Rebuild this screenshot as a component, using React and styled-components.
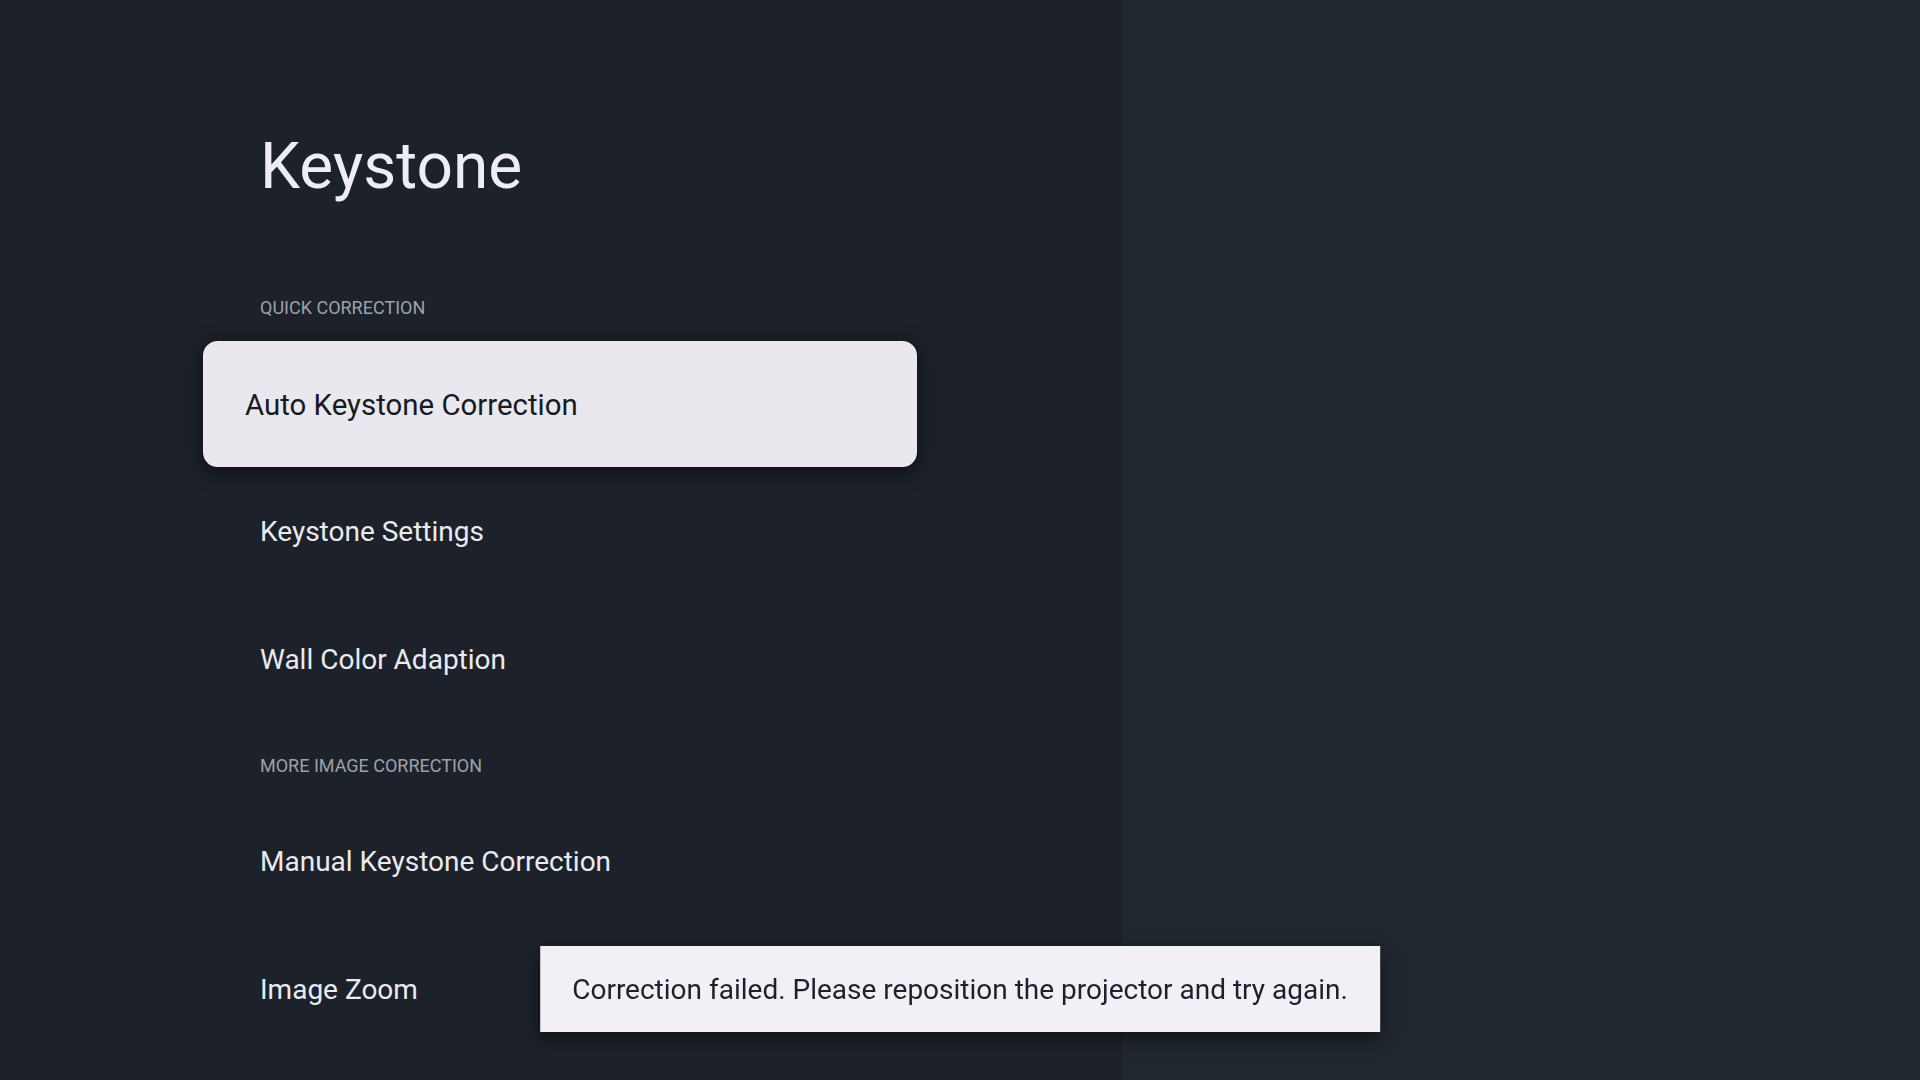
import React from "react";
import styled, { createGlobalStyle, css } from "styled-components";

const GlobalStyle = createGlobalStyle`
  html, body {
    margin: 0;
    padding: 0;
    background: #21272f;
    overflow: hidden;
  }

  body {
    font-family: Roboto, "Noto Sans", "Liberation Sans", sans-serif;
    -webkit-font-smoothing: antialiased;
  }
`;

const Screen = styled.div`
  display: flex;
  width: 100vw;
  height: 100vh;
`;

const SidePanel = styled.div`
  width: 1122px;
  flex-shrink: 0;
  background: #1d2129;
  padding: 129px 0 0 220px;
  box-sizing: border-box;
  display: flex;
  flex-direction: column;
`;

const Backdrop = styled.div`
  flex: 1;
  background: #21272f;
`;

const Title = styled.h1`
  margin: 0 0 64px 40px;
  font-size: 64px;
  font-weight: 400;
  line-height: 1.2;
  color: #eceef3;
`;

const List = styled.div`
  display: flex;
  flex-direction: column;
  gap: 8px;
  width: 680px;
`;

const SectionHeader = styled.div`
  padding: 26px 40px 16px;
  font-size: 18px;
  line-height: 24px;
  text-transform: uppercase;
  color: #9ca2ab;
`;

const Item = styled.div`
  height: 120px;
  padding: 0 40px;
  box-sizing: border-box;
  display: flex;
  align-items: center;
  font-size: 28px;
  color: #e9ebf0;
  border-radius: 14px;

  ${(p) =>
    p.$focused &&
    css`
      background: #e8e8ee;
      color: #171a20;
      transform: scale(1.05);
      box-shadow: 0 4px 18px rgba(0, 0, 0, 0.55);
    `}
`;

const Toast = styled.div`
  position: fixed;
  left: 50%;
  bottom: 48px;
  transform: translateX(-50%);
  height: 86px;
  padding: 0 32px;
  box-sizing: border-box;
  display: flex;
  align-items: center;
  white-space: nowrap;
  background: #f0f0f6;
  color: #1d2129;
  font-size: 28px;
  box-shadow: 0 6px 16px rgba(0, 0, 0, 0.5);
`;

const sections = [
  {
    title: "Quick correction",
    items: ["Auto Keystone Correction", "Keystone Settings", "Wall Color Adaption"],
  },
  {
    title: "More image correction",
    items: ["Manual Keystone Correction", "Image Zoom"],
  },
];

const App = () => {
  const focused = "Auto Keystone Correction";

  return (
    <>
      <GlobalStyle />
      <Screen>
        <SidePanel>
          <Title>Keystone</Title>
          <List>
            {sections.map((section) => (
              <React.Fragment key={section.title}>
                <SectionHeader>{section.title}</SectionHeader>
                {section.items.map((label) => (
                  <Item key={label} $focused={label === focused}>
                    {label}
                  </Item>
                ))}
              </React.Fragment>
            ))}
          </List>
        </SidePanel>
        <Backdrop />
      </Screen>
      <Toast>Correction failed. Please reposition the projector and try again.</Toast>
    </>
  );
};

export default App;
